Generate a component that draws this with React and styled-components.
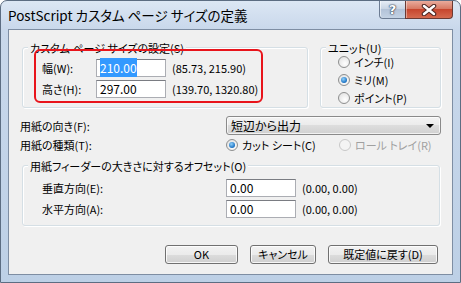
import React from 'react'
import styled, { createGlobalStyle } from 'styled-components'

const Global = createGlobalStyle`
  html, body { margin: 0; padding: 0; background: #ffffff; }
  * { box-sizing: border-box; }
  body {
    font-family: "Noto Sans CJK JP", "Noto Sans", sans-serif;
    font-feature-settings: "palt";
    font-size: 11px;
    color: #000;
  }
`

const App = () => {
  return (
    <>
      <Global />
      <Window>
        <TitleBar>
          <Title>PostScript カスタム ページ サイズの定義</Title>
          <Caption>
            <HelpBtn>?</HelpBtn>
            <CloseBtn>
              <svg width="16" height="12" viewBox="0 0 16 12">
                <path d="M3 2 L13 10 M13 2 L3 10" stroke="#4a2420" strokeWidth="4.5" strokeLinecap="round" />
                <path d="M3 2 L13 10 M13 2 L3 10" stroke="#ffffff" strokeWidth="2.5" strokeLinecap="round" />
              </svg>
            </CloseBtn>
          </Caption>
        </TitleBar>
        <Client>
          <TopRow>
            <Group $w={286} $h={61}>
              <Legend>カスタム ページ サイズの設定(S)</Legend>
              <RedBox>
                <FieldRow>
                  <FieldLabel $w={54}>幅(W):</FieldLabel>
                  <TextBox $w={70}><Selected>210.00</Selected></TextBox>
                  <Range>(85.73, 215.90)</Range>
                </FieldRow>
                <FieldRow>
                  <FieldLabel $w={54}>高さ(H):</FieldLabel>
                  <TextBox $w={70}>297.00</TextBox>
                  <Range>(139.70, 1320.80)</Range>
                </FieldRow>
              </RedBox>
            </Group>
            <Group $w={121} $h={61}>
              <Legend>ユニット(U)</Legend>
              <RadioList>
                <RadioItem><Radio />インチ(I)</RadioItem>
                <RadioItem><Radio $checked />ミリ(M)</RadioItem>
                <RadioItem><Radio />ポイント(P)</RadioItem>
              </RadioList>
            </Group>
          </TopRow>

          <LineRow $mt={8}>
            <FieldLabel $w={206}>用紙の向き(F):</FieldLabel>
            <Select>
              <span>短辺から出力</span>
              <Arrow />
            </Select>
          </LineRow>

          <LineRow $mt={1}>
            <FieldLabel $w={206}>用紙の種類(T):</FieldLabel>
            <RadioItem $w={113}><Radio $checked />カット シート(C)</RadioItem>
            <RadioItem $disabled><Radio $disabled />ロール トレイ(R)</RadioItem>
          </LineRow>

          <OffsetGroup $w={418} $h={61}>
            <Legend>用紙フィーダーの大きさに対するオフセット(O)</Legend>
            <FieldRow>
              <FieldLabel $w={184}>垂直方向(E):</FieldLabel>
              <TextBox $w={70}>0.00</TextBox>
              <Range>(0.00, 0.00)</Range>
            </FieldRow>
            <FieldRow>
              <FieldLabel $w={184}>水平方向(A):</FieldLabel>
              <TextBox $w={70}>0.00</TextBox>
              <Range>(0.00, 0.00)</Range>
            </FieldRow>
          </OffsetGroup>

          <ButtonRow>
            <Button $w={73}>OK</Button>
            <Button $w={66}>キャンセル</Button>
            <Button $w={110}>既定値に戻す(D)</Button>
          </ButtonRow>
        </Client>
      </Window>
    </>
  )
}

export default App

const Window = styled.div`
  width: 461px;
  height: 283px;
  border: 1px solid #5c6d82;
  border-radius: 7px 7px 0 0;
  background: linear-gradient(#dce7f4, #c9d8eb 28px, #bdd0e6);
  padding: 0 7px 7px 7px;
  display: flex;
  flex-direction: column;
`
const TitleBar = styled.div`
  height: 28px;
  display: flex;
  align-items: flex-start;
`
const Title = styled.div`
  font-size: 13.5px;
  line-height: 29px;
  color: #000;
  white-space: nowrap;
`
const Caption = styled.div`
  margin-left: auto;
  display: flex;
`
const HelpBtn = styled.div`
  width: 26px;
  height: 18px;
  border: 1px solid #6c7c93;
  border-top: none;
  border-right: none;
  border-radius: 0 0 0 4px;
  background: linear-gradient(#e6edf6, #c9d5e4 45%, #b3c3d8 50%, #c3d2e4);
  box-shadow: inset 1px 0 0 rgba(255,255,255,0.6);
  color: #fff;
  font-family: "DejaVu Sans", sans-serif;
  font-weight: bold;
  font-size: 13px;
  line-height: 17px;
  text-align: center;
  text-shadow: 0 0 1px #2f3d52, 0 0 1px #2f3d52, 0 0 2px #2f3d52;
`
const CloseBtn = styled.div`
  width: 48px;
  height: 18px;
  border: 1px solid #6b3a33;
  border-top: none;
  border-radius: 0 0 4px 0;
  background: linear-gradient(#e9ab9c, #d77a64 45%, #c7462e 50%, #d56a4f);
  box-shadow: inset 1px 0 0 rgba(255,255,255,0.4);
  display: flex;
  align-items: center;
  justify-content: center;
`
const Client = styled.div`
  flex: 1;
  border: 1px solid #7e8ea3;
  background: #f0f0f0;
  padding: 17px 11px 0 11px;
  display: flex;
  flex-direction: column;
`
const TopRow = styled.div`
  display: flex;
  gap: 12px;
  margin-left: 2px;
`
const Group = styled.div`
  position: relative;
  width: ${p => p.$w}px;
  height: ${p => p.$h}px;
  border: 1px solid #d5dfe5;
  border-radius: 3px;
  box-shadow: inset 1px 1px 0 #ffffff, 1px 1px 0 #ffffff;
`
const Legend = styled.span`
  position: absolute;
  top: -8px;
  left: 5px;
  padding: 0 2px;
  background: #f0f0f0;
  line-height: 16px;
  white-space: nowrap;
`
const RedBox = styled.div`
  position: relative;
  z-index: 1;
  margin: 1px 0 0 11px;
  width: 229px;
  height: 54px;
  border: 2px solid #e8141b;
  border-radius: 6px;
  padding: 8px 0 0 6px;
  display: flex;
  flex-direction: column;
  gap: 3px;
`
const FieldRow = styled.div`
  display: flex;
  align-items: center;
  height: 18px;
`
const FieldLabel = styled.span`
  width: ${p => p.$w}px;
  flex-shrink: 0;
  white-space: nowrap;
`
const TextBox = styled.div`
  width: ${p => p.$w}px;
  height: 18px;
  border: 1px solid #abadb3;
  border-top-color: #7a7c82;
  background: #ffffff;
  padding-left: 3px;
  font-size: 12px;
  line-height: 16px;
  white-space: nowrap;
`
const Selected = styled.span`
  background: #3399ff;
  color: #ffffff;
  padding: 1px 0;
`
const Range = styled.span`
  margin-left: 6px;
  white-space: nowrap;
`
const RadioList = styled.div`
  padding: 5px 0 0 17px;
  display: flex;
  flex-direction: column;
`
const RadioItem = styled.div`
  display: flex;
  align-items: center;
  height: 18px;
  white-space: nowrap;
  width: ${p => (p.$w ? `${p.$w}px` : 'auto')};
  color: ${p => (p.$disabled ? '#a0a0a0' : '#000')};
`
const Radio = styled.span`
  position: relative;
  width: 12px;
  height: 12px;
  margin-right: 4px;
  border-radius: 50%;
  border: 1px solid ${p => (p.$disabled ? '#c8c8c8' : '#8e8f8f')};
  background: ${p => (p.$disabled ? '#f4f4f4' : 'radial-gradient(circle at 60% 65%, #ffffff, #dcdcdc)')};
  flex-shrink: 0;

  &::after {
    content: '';
    display: ${p => (p.$checked ? 'block' : 'none')};
    position: absolute;
    left: 2px;
    top: 2px;
    width: 6px;
    height: 6px;
    border-radius: 50%;
    background: radial-gradient(circle at 40% 35%, #8fd0fa, #1b71c2 70%, #0f4b8c);
  }
`
const LineRow = styled.div`
  display: flex;
  align-items: center;
  margin-top: ${p => p.$mt}px;
  min-height: 18px;
`
const Select = styled.div`
  width: 215px;
  height: 19px;
  border: 1px solid #8a8a8a;
  border-radius: 3px;
  background: linear-gradient(#f3f3f3, #ebebeb 50%, #dddddd 50%, #d0d0d0);
  box-shadow: inset 0 0 0 1px rgba(255,255,255,0.7);
  display: flex;
  align-items: center;
  padding: 0 6px 0 4px;
  line-height: 17px;
  font-size: 12px;
`
const Arrow = styled.span`
  margin-left: auto;
  width: 0;
  height: 0;
  border-left: 4px solid transparent;
  border-right: 4px solid transparent;
  border-top: 4px solid #000;
`
const OffsetGroup = styled(Group)`
  margin: 11px 0 0 2px;
  padding: 13px 0 0 19px;
  display: flex;
  flex-direction: column;
  gap: 3px;
`
const ButtonRow = styled.div`
  display: flex;
  justify-content: flex-end;
  gap: 12px;
  margin-top: 19px;
  padding-right: 3px;
`
const Button = styled.div`
  width: ${p => p.$w}px;
  height: 19px;
  border: 1px solid #707070;
  border-radius: 3px;
  background: linear-gradient(#f2f2f2, #ebebeb 50%, #dddddd 50%, #cfcfcf);
  box-shadow: inset 0 0 0 1px rgba(255,255,255,0.8);
  text-align: center;
  line-height: 17px;
  white-space: nowrap;
`
